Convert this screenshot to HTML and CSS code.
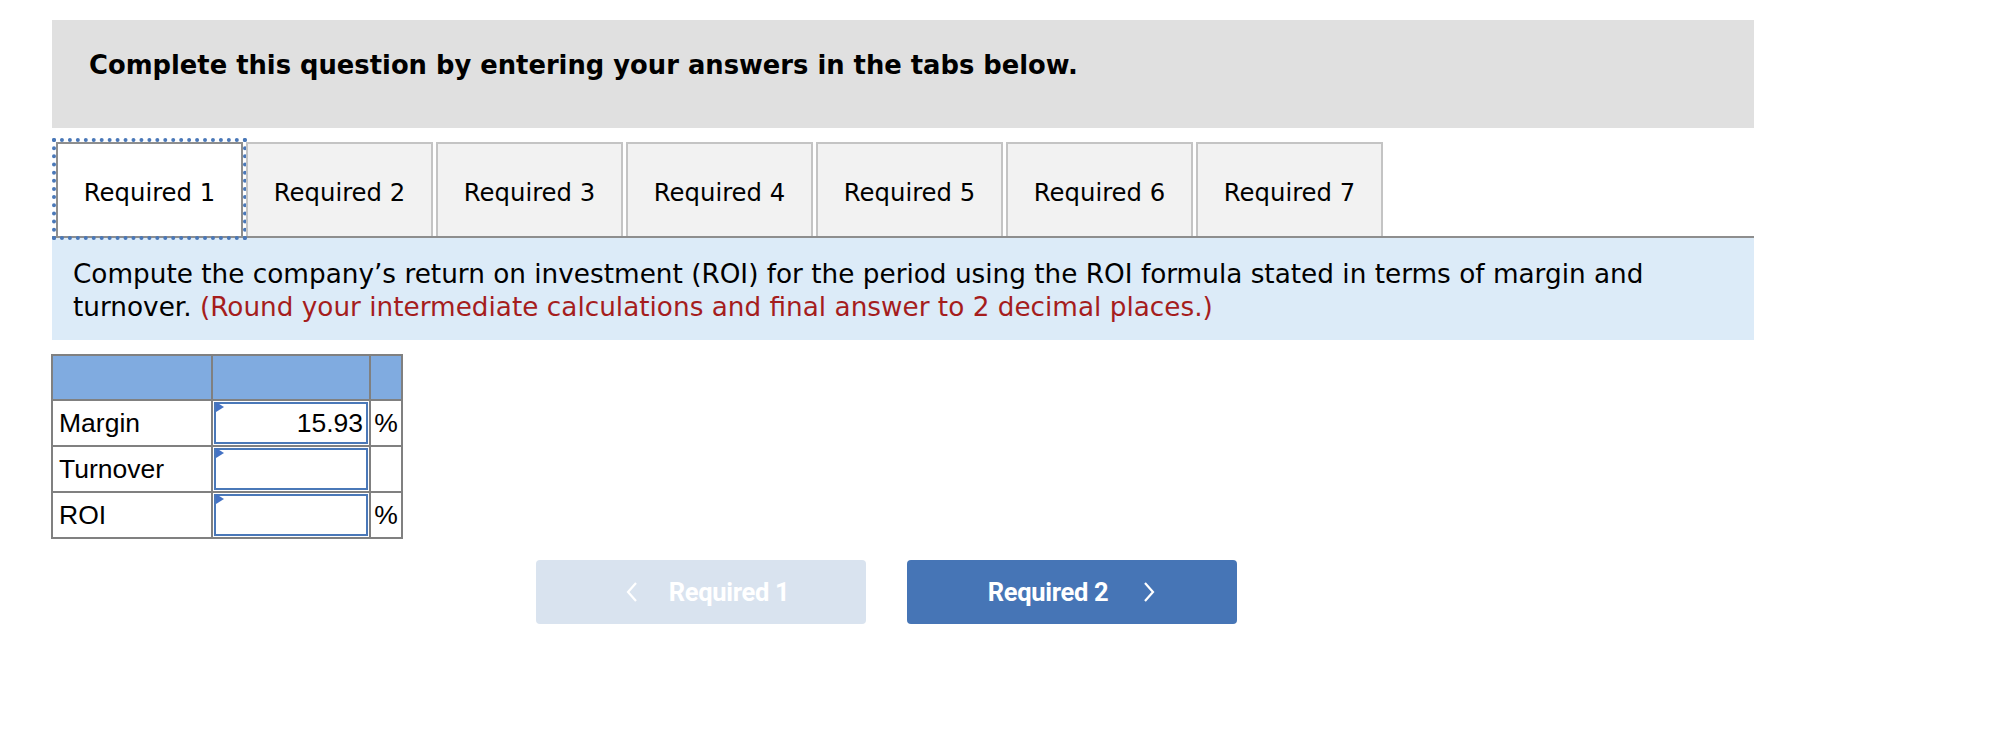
FILE: index.html
```html
<!DOCTYPE html>
<html>
<head>
<meta charset="utf-8">
<link rel="stylesheet" href="styles.css">
</head>
<body>
<div class="page">
  <div class="banner">Complete this question by entering your answers in the tabs below.</div>

  <div class="tabs">
    <div class="tab active">Required 1</div>
    <div class="tab">Required 2</div>
    <div class="tab">Required 3</div>
    <div class="tab">Required 4</div>
    <div class="tab">Required 5</div>
    <div class="tab">Required 6</div>
    <div class="tab">Required 7</div>
  </div>

  <div class="prompt">Compute the company’s return on investment (ROI) for the period using the ROI formula stated in terms of margin and turnover. <span class="hint">(Round your intermediate calculations and final answer to 2 decimal places.)</span></div>

  <table class="grid">
    <tr class="head"><td class="c-label"></td><td class="c-input"></td><td class="c-unit"></td></tr>
    <tr><td class="c-label">Margin</td><td class="c-input"><div class="field">15.93</div></td><td class="c-unit">%</td></tr>
    <tr><td class="c-label">Turnover</td><td class="c-input"><div class="field"></div></td><td class="c-unit"></td></tr>
    <tr><td class="c-label">ROI</td><td class="c-input"><div class="field"></div></td><td class="c-unit">%</td></tr>
  </table>

  <div class="nav">
    <div class="btn btn-prev">
      <svg class="chev" width="14" height="24" viewBox="0 0 14 24"><path d="M11 3 L3 12 L11 21" fill="none" stroke="#fff" stroke-width="2.2"/></svg>
      <span>Required 1</span>
    </div>
    <div class="btn btn-next">
      <span>Required 2</span>
      <svg class="chev" width="14" height="24" viewBox="0 0 14 24"><path d="M3 3 L11 12 L3 21" fill="none" stroke="#fff" stroke-width="2.2"/></svg>
    </div>
  </div>
</div>
</body>
</html>
```

FILE: styles.css
```css
html, body {
  margin: 0;
  padding: 0;
  background: #ffffff;
}

.page {
  width: 1702px;
  padding: 20px 0 0 52px;
  font-family: "DejaVu Sans", Verdana, sans-serif;
  color: #000;
}

.banner {
  height: 108px;
  box-sizing: border-box;
  background: #e0e0e0;
  padding: 0 0 19px 37px;
  display: flex;
  align-items: center;
  font-weight: bold;
  font-size: 25.8px;
}

.tabs {
  margin-top: 12px;
  display: flex;
  align-items: flex-end;
  border-bottom: 2px solid #8e8e8e;
  height: 98px;
  box-sizing: border-box;
  padding-left: 4px;
  gap: 3px;
}

.tab {
  width: 187px;
  height: 94px;
  box-sizing: border-box;
  border: 2px solid #c4c4c4;
  border-bottom: none;
  background: #f2f2f2;
  display: flex;
  align-items: center;
  justify-content: center;
  font-size: 24.3px;
  padding-top: 4px;
}

.tab.active {
  background: #ffffff;
  border-color: #8e8e8e;
  outline: 4px dotted #4a78b8;
  outline-offset: 0;
}

.prompt {
  background: #dcebf8;
  padding: 20px 20px 16px 21px;
  font-size: 26.3px;
  line-height: 33px;
}

.hint {
  color: #a51d1d;
}

.grid {
  margin-top: 14px;
  margin-left: -1px;
  border-collapse: collapse;
  font-family: "Liberation Sans", Arial, sans-serif;
  font-size: 26.5px;
}

.grid td {
  border: 2px solid #808080;
  padding: 0;
  height: 46px;
  box-sizing: border-box;
}

.grid .head td {
  background: #80abe0;
  height: 45px;
}

.c-label {
  width: 160px;
  padding-left: 6px !important;
  text-align: left;
}

.c-input {
  width: 158px;
}

.c-unit {
  width: 32px;
  text-align: center;
}

.field {
  box-sizing: border-box;
  height: 42px;
  border: 2px solid #4a78b8;
  margin: 0 1px 0 1px;
  text-align: right;
  padding-right: 3px;
  line-height: 38px;
  position: relative;
}

.field::before {
  content: "";
  position: absolute;
  left: 0;
  top: -2px;
  border-top: 5px solid transparent;
  border-bottom: 5px solid transparent;
  border-left: 8px solid #4472c4;
}

.nav {
  margin-top: 21px;
  margin-left: 484px;
  display: flex;
  gap: 41px;
}

.btn {
  width: 330px;
  height: 64px;
  box-sizing: border-box;
  border-radius: 4px;
  display: flex;
  align-items: center;
  justify-content: center;
  font-family: Roboto, "Liberation Sans", sans-serif;
  font-weight: bold;
  font-size: 25.5px;
  letter-spacing: -0.3px;
  color: #fff;
}

.btn-prev {
  background: #d9e3ef;
  gap: 30px;
  padding-left: 12px;
}

.btn-next {
  background: #4675b6;
  gap: 34px;
}

.chev {
  display: block;
}
```
